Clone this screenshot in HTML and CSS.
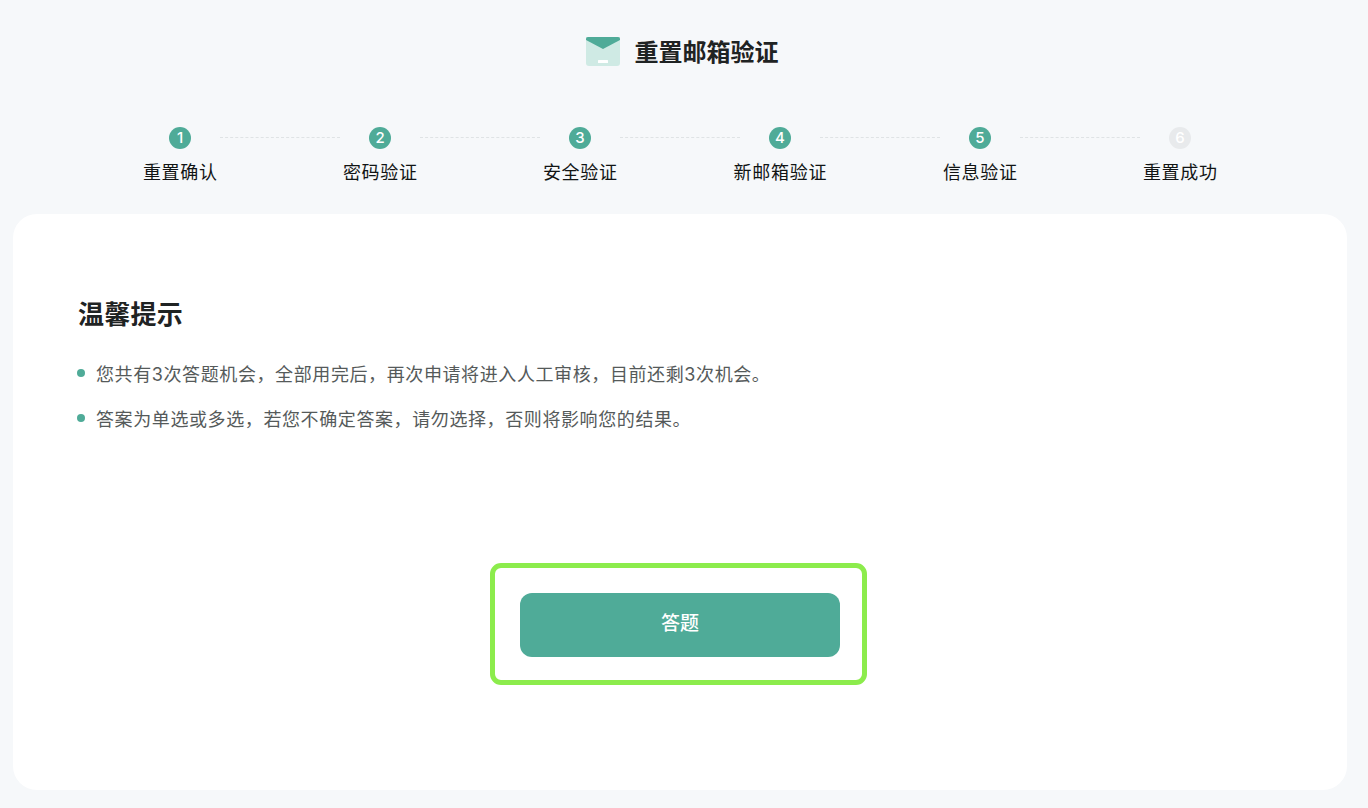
FILE: index.html
```html
<!DOCTYPE html>
<html>
	<head>
		<meta charset="utf-8">
		<title>重置邮箱验证</title>
		<link rel="stylesheet" href="styles.css">
	</head>
	<body>
	<div class="page">
		<!--标题-->
		<div class="head">
			<svg class="head_icon" viewBox="0 0 34 29" width="34" height="29">
				<path d="M0 0H34V26a3 3 0 0 1-3 3H3a3 3 0 0 1-3-3Z" fill="#cfeae4"/>
				<path d="M2 0H32a2 2 0 0 1 2 2V3L17 12 0 3V2a2 2 0 0 1 2-2Z" fill="#4fab98"/>
				<rect x="12" y="23" width="10" height="3" rx="0.5" fill="#fff"/>
			</svg>
			<h1>重置邮箱验证</h1>
		</div>
		<!--步骤-->
		<div class="dots">
			<span class="dot">1</span><i></i>
			<span class="dot">2</span><i></i>
			<span class="dot">3</span><i></i>
			<span class="dot">4</span><i></i>
			<span class="dot">5</span><i></i>
			<span class="dot off">6</span>
		</div>
		<ul class="steps">
			<li>重置确认</li>
			<li>密码验证</li>
			<li>安全验证</li>
			<li>新邮箱验证</li>
			<li>信息验证</li>
			<li>重置成功</li>
		</ul>
		<!--内容-->
		<div class="card">
			<h2>温馨提示</h2>
			<ul class="tips">
				<li>您共有3次答题机会，全部用完后，再次申请将进入人工审核，目前还剩3次机会。</li>
				<li>答案为单选或多选，若您不确定答案，请勿选择，否则将影响您的结果。</li>
			</ul>
			<div class="btn_box">
				<a href="javascript:;" class="btn">答题</a>
			</div>
		</div>
	</div>
	</body>
</html>
```

FILE: styles.css
```css
*{margin:0px;padding:0px;list-style:none;box-sizing:border-box;}
html,body{height:100%;}
body{background:#f6f8fa;font-family:"Inter","Noto Sans CJK SC",sans-serif;color:#1f2323;overflow:hidden;}
.page{width:1360px;height:808px;padding-top:37px;}
/*标题*/
.head{display:flex;justify-content:center;align-items:center;height:29px;margin-left:4px;}
.head_icon{display:block;margin-right:15px;}
.head h1{font-size:24px;line-height:29px;font-weight:600;color:#1f2323;padding-top:2px;}
/*步骤*/
.dots{display:flex;justify-content:center;align-items:flex-start;margin-top:61px;height:22px;}
.dot{width:22px;height:22px;border-radius:50%;background:#4fab98;color:#fff;font-size:15px;font-weight:500;line-height:22px;text-align:center;}
.dot.off{background:#e8eaec;}
.dots i{width:120px;margin:10px 29px 0;border-top:1px dashed #dfe3e5;}
.steps{display:flex;justify-content:center;margin-top:12px;}
.steps li{width:200px;text-align:center;font-size:18px;line-height:24px;letter-spacing:0.75px;text-indent:0.75px;color:#111414;}
/*内容*/
.card{width:1334px;height:576px;margin:29px 0 0 13px;padding:83px 64px 0;background:#fff;border-radius:24px;}
.card h2{font-size:26px;line-height:34px;letter-spacing:0.25px;font-weight:600;color:#1f2323;margin-left:1px;padding-top:1px;}
.tips{margin-top:18px;}
.tips li{display:flex;align-items:center;height:45px;font-size:18px;letter-spacing:0.6px;color:#555a5a;}
.tips li:before{content:"";width:8px;height:8px;border-radius:50%;background:#4fab98;margin-right:11px;flex:none;}
.btn_box{width:377px;height:122px;margin:123px 0 0 413px;padding:25px 0 0 25px;border:5px solid #8cec4c;border-radius:11px;}
.btn{display:block;width:320px;height:64px;border-radius:12px;background:#4fab98;color:#fff;font-size:19px;font-weight:500;line-height:62px;text-align:center;text-decoration:none;}
```
